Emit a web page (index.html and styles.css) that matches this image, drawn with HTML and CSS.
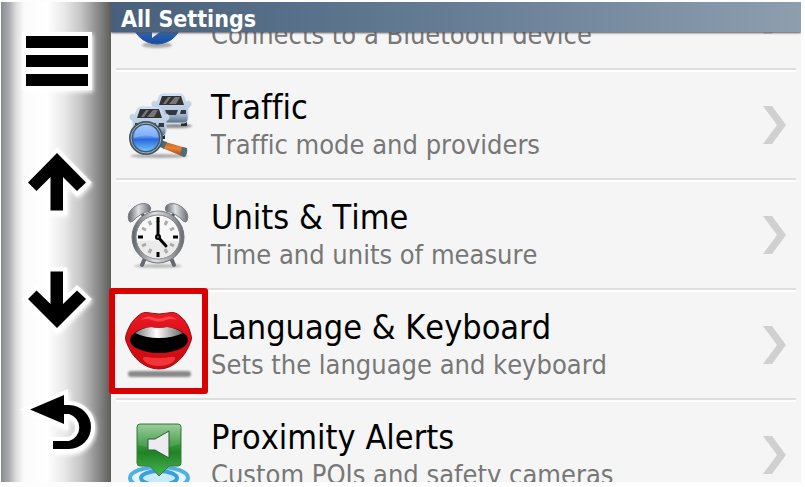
FILE: index.html
```html
<!DOCTYPE html>
<html lang="en">
<head>
    <meta charset="UTF-8">
    <meta name="viewport" content="width=device-width, initial-scale=1.0">
    <title>All Settings</title>
    <link rel="stylesheet" href="styles.css">
</head>
<body>
  <div class="device">
      <nav class="sidebar">
          <button type="button" aria-label="Menu">
              <svg viewBox="0 0 110 120">
                  <path class="glow" d="M21 30H91V88H21Z"/>
                  <path d="M25 34H87V46H25ZM25 53H87V65H25ZM25 72H87V84H25Z"/>
              </svg>
          </button>
          <button type="button" aria-label="Up">
              <svg viewBox="0 0 110 120">
                  <path class="outline" d="M56 31L27 60.500L35.500 69L49.500 55V88.500H62V55L76 69L85 60.500Z"/>
              </svg>
          </button>
          <button type="button" aria-label="Down">
              <svg viewBox="0 0 110 120">
                  <path class="outline" d="M56 86L27 57L35.500 48.500L49.500 62V29.500H62V62L76 48.500L85 57Z"/>
              </svg>
          </button>
          <button type="button" aria-label="Back">
              <svg viewBox="0 0 110 120">
                  <path class="outline" d="M29 47.500L63 33V43H68A22 22 0 0 1 68 87H52V79H68A14 14 0 0 0 68 52H63V62Z"/>
              </svg>
          </button>
      </nav>

      <main class="content">
          <h1>All Settings</h1>
          <ul class="settings">
              <li class="scrolled">
                  <a href="#bluetooth" aria-label="Bluetooth">
                      <svg class="icon" viewBox="0 0 70 70">
                          <defs>
                              <linearGradient id="blue" x2="0" y2="1">
                                  <stop offset="0" stop-color="#78b5f2"/>
                                  <stop offset="1" stop-color="#174c9f"/>
                              </linearGradient>
                              <filter id="soft" x="-20%" y="-60%" width="140%" height="220%"><feGaussianBlur stdDeviation="1"/></filter>
                          </defs>
                          <ellipse cx="33" cy="65" rx="15" ry="3" fill="#aaa" filter="url(#soft)"/>
                          <circle cx="33" cy="39" r="25" fill="url(#blue)" stroke="#2a569b"/>
                          <path d="M22 30L43 44L30 54V24L43 33L22 46" fill="none" stroke="#eef4ff" stroke-width="4"/>
                      </svg>
                      <span class="text"><small>Connects to a Bluetooth device</small></span>
                      <svg class="arrow" viewBox="0 0 24 38"><path d="M0 0H9L23 19L9 38H0L14 19Z"/></svg>
                  </a>
              </li>
              <li>
                  <a href="#traffic">
                      <svg class="icon" viewBox="0 0 70 70">
                          <defs>
                              <linearGradient id="body" x2="0" y2="1">
                                  <stop offset="0" stop-color="#d3e2f4"/>
                                  <stop offset="0.650" stop-color="#b4c8de"/>
                                  <stop offset="1" stop-color="#586f81"/>
                              </linearGradient>
                              <linearGradient id="lens" x2="0" y2="1">
                                  <stop offset="0" stop-color="#9cc4fb"/>
                                  <stop offset="0.450" stop-color="#5d97f3"/>
                                  <stop offset="0.550" stop-color="#2a68dc"/>
                                  <stop offset="1" stop-color="#7fd0ff"/>
                              </linearGradient>
                              <linearGradient id="handle" x1="0.600" y1="0" x2="0.400" y2="1">
                                  <stop offset="0" stop-color="#b8520f"/>
                                  <stop offset="0.450" stop-color="#e9813a"/>
                                  <stop offset="1" stop-color="#8a3506"/>
                              </linearGradient>
                              <g id="car">
                                  <path d="M5 25H11V32H5ZM30 25H36V32H30Z" fill="#252a2e"/>
                                  <path d="M8 3Q9 0 12 0H29Q32 0 33 3L35 8Q39 6 40 9Q41 12 37 14V24Q37 29 32 29H9Q4 29 4 24V14Q0 12 1 9Q2 6 6 8Z" fill="url(#body)" stroke="#c3d5eb"/>
                                  <path d="M11 2H30L33 11H8Z" fill="#333"/>
                                  <path d="M17 3L12 10H15L20 3ZM24 3L18 10H25L29 3Z" fill="#777"/>
                                  <path d="M14 16H27L25 21H16ZM6 16H11L12 20H6ZM30 16H35V20H29Z" fill="#303a44"/>
                              </g>
                          </defs>
                          <ellipse cx="51" cy="36" rx="17" ry="2" fill="#888" filter="url(#soft)"/>
                          <use href="#car" x="27" y="4"/>
                          <use href="#car" x="5" y="17"/>
                          <ellipse cx="35" cy="66" rx="29" ry="2" fill="#aaa" filter="url(#soft)"/>
                          <path d="M38 51L62 58Q64 62 60 67L36 57Z" fill="url(#handle)"/>
                          <path d="M37 50L43 52L40 59L35 56ZM58 57L63 58Q64 63 61 67L56 65Z" fill="#536a76"/>
                          <circle cx="22" cy="48" r="15" fill="url(#lens)" stroke="#405766" stroke-width="4"/>
                          <circle cx="22" cy="48" r="15" fill="none" stroke="#9fb4bf"/>
                          <path d="M10 48Q11 35 22 35T34 48Q22 43 10 48Z" fill="#cde2ff" opacity="0.300"/>
                      </svg>
                      <span class="text"><strong>Traffic</strong><small>Traffic mode and providers</small></span>
                      <svg class="arrow" viewBox="0 0 24 38"><path d="M0 0H9L23 19L9 38H0L14 19Z"/></svg>
                  </a>
              </li>
              <li>
                  <a href="#units">
                      <svg class="icon" viewBox="0 0 70 70">
                          <defs>
                              <linearGradient id="metal">
                                  <stop offset="0" stop-color="#5d6065"/>
                                  <stop offset="0.450" stop-color="#dfe1e4"/>
                                  <stop offset="1" stop-color="#686b70"/>
                              </linearGradient>
                          </defs>
                          <ellipse cx="34" cy="66" rx="24" ry="2" fill="#bbb" filter="url(#soft)"/>
                          <path d="M21 58L18 65M47 58L50 65" stroke="#666a70" stroke-width="4" stroke-linecap="round"/>
                          <path d="M20 17L17 12M48 17L51 12" stroke="#55585c" stroke-width="3"/>
                          <path d="M5 21Q2 13 10 7Q19 1 25 5Q28 8 26 11Q16 13 9 21Q6 23 5 21Z" fill="url(#metal)" stroke="#7b7e83"/>
                          <path d="M63 21Q66 13 58 7Q49 1 43 5Q40 8 42 11Q52 13 59 21Q62 23 63 21Z" fill="url(#metal)" stroke="#7b7e83"/>
                          <circle cx="34" cy="37" r="26" fill="url(#metal)" stroke="#6f747b"/>
                          <circle cx="34" cy="37" r="22" fill="#f8f8f8" stroke="#85898e"/>
                          <path d="M13 41Q34 40 55 41Q51 58 34 58T13 41Z" fill="#ebebeb"/>
                          <path d="M25 21L27 25M43 21L41 25M18 28L22 30M50 28L46 30M18 46L22 44M50 46L46 44M25 53L27 49M43 53L41 49" stroke="#aaa" stroke-width="3"/>
                          <path d="M34 17V22M34 52V57M14 37H19M49 37H54" stroke="#000" stroke-width="3"/>
                          <path d="M34 37V22M34 37L42 46" stroke="#000" stroke-width="3" stroke-linecap="round"/>
                          <circle cx="34" cy="37" r="3"/>
                          <circle cx="34" cy="37" r="1" fill="#777"/>
                      </svg>
                      <span class="text"><strong>Units &amp; Time</strong><small>Time and units of measure</small></span>
                      <svg class="arrow" viewBox="0 0 24 38"><path d="M0 0H9L23 19L9 38H0L14 19Z"/></svg>
                  </a>
              </li>
              <li class="highlight">
                  <a href="#language">
                      <svg class="icon" viewBox="0 0 70 70">
                          <defs>
                              <linearGradient id="lips" x2="0" y2="1">
                                  <stop offset="0" stop-color="#e91b24"/>
                                  <stop offset="0.500" stop-color="#d90c16"/>
                                  <stop offset="1" stop-color="#c50d12"/>
                              </linearGradient>
                              <linearGradient id="teeth">
                                  <stop offset="0" stop-color="#777"/>
                                  <stop offset="0.450" stop-color="#fff"/>
                                  <stop offset="1" stop-color="#666"/>
                              </linearGradient>
                          </defs>
                          <rect x="4" y="61" width="63" height="6" rx="3" fill="#888" filter="url(#soft)"/>
                          <path d="M2 25Q6 12 14 6Q19 1 26 3Q35 5 44 3Q51 1 56 6Q64 12 67 25Q68 28 67 31Q62 45 53 52Q45 59 35 59T16 52Q7 45 2 31Q1 28 2 25Z" fill="url(#lips)" stroke="#970b10"/>
                          <path d="M17 10Q22 5 28 7Q35 10 42 7Q48 5 53 10Q47 8 42 10Q35 13 28 10Q23 8 17 10Z" fill="#f9444a"/>
                          <path d="M7 26Q14 18 27 17Q35 19 43 17Q56 18 63 26Q66 34 58 38Q48 43 35 43T12 38Q4 34 7 26Z" fill="#000"/>
                          <path d="M11 23Q18 18 27 17Q35 19 43 17Q52 18 59 23Q49 28 35 28T11 23Z" fill="url(#teeth)"/>
                          <path d="M19 49Q19 46 23 47Q35 49 47 47Q52 46 51 49Q48 56 35 56T19 49Z" fill="#f33538"/>
                      </svg>
                      <span class="text"><strong>Language &amp; Keyboard</strong><small>Sets the language and keyboard</small></span>
                      <svg class="arrow" viewBox="0 0 24 38"><path d="M0 0H9L23 19L9 38H0L14 19Z"/></svg>
                  </a>
              </li>
              <li>
                  <a href="#alerts">
                      <svg class="icon" viewBox="0 0 70 70">
                          <defs>
                              <linearGradient id="green" x2="0" y2="1">
                                  <stop offset="0" stop-color="#8fc790"/>
                                  <stop offset="0.350" stop-color="#3d9b41"/>
                                  <stop offset="0.550" stop-color="#208227"/>
                                  <stop offset="1" stop-color="#48b64b"/>
                              </linearGradient>
                          </defs>
                          <ellipse cx="35" cy="58" rx="29" ry="11" fill="#e4f5ff" stroke="#50afe3" stroke-width="4"/>
                          <ellipse cx="35" cy="58" rx="18" ry="7" fill="#c9eafd" stroke="#3a9fdd" stroke-width="4"/>
                          <path d="M16 4H54Q57 4 57 7V43Q57 46 54 46H45L35 56L26 46H16Q13 46 13 43V7Q13 4 16 4Z" fill="url(#green)" stroke="#3b7b3d"/>
                          <path d="M14 5H56V24Q34 32 14 25Z" fill="#fff" opacity="0.120"/>
                          <path d="M24 19H31L45 11V38L31 30H24Z" fill="#ececf0" stroke="#285d2b"/>
                      </svg>
                      <span class="text"><strong>Proximity Alerts</strong><small>Custom POIs and safety cameras</small></span>
                      <svg class="arrow" viewBox="0 0 24 38"><path d="M0 0H9L23 19L9 38H0L14 19Z"/></svg>
                  </a>
              </li>
          </ul>
      </main>
  </div>
</body>
</html>
```

FILE: styles.css
```css
*,
*::after {
    box-sizing: border-box;
}
body {
    margin: 0;
    padding: 2px 4px 5px 1px;
    height: 100vh;
    background-color: #fdfdfd;
    font-family: "DejaVu Sans Condensed", "DejaVu Sans", sans-serif;
    font-kerning: none;
    font-variant-ligatures: none;
}
.device {
    display: flex;
    height: 100%;
    overflow: hidden;
    background-color: #f5f5f5;
}
.sidebar {
    display: flex;
    flex-direction: column;
    flex: 0 0 110px;
    background: linear-gradient(to right, #888c93 0%, #a8aaae 7%, #dedede 14%, #fbfbfb 21%, #fff 42%, #e8e8e8 58%, #c4c4c4 73%, #929292 86%, #5e5e5b 100%);
}
.sidebar button {
    flex: 1;
    min-height: 0;
    padding: 0;
    border: none;
    background: none;
    cursor: pointer;
}
.sidebar svg {
    display: block;
    width: 100%;
    height: 100%;
}
.glow {
    fill: #fff;
    filter: drop-shadow(1px 2px 2px #fff);
}
.outline {
    stroke: #fff;
    stroke-width: 8px;
    paint-order: stroke;
    filter: drop-shadow(1px 2px 2px #fff);
}
.content {
    flex: 1;
    min-width: 0;
}
h1 {
    position: relative;
    z-index: 1;
    height: 30px;
    margin: 0;
    padding-left: 10px;
    background: linear-gradient(to right, #48607b, #667d95 50%, #8e9eaf);
    box-shadow: 0 1px 2px #555;
    color: #fff;
    font-size: 23px;
    line-height: 34px;
}
/* list is scrolled down by most of the first row */
.settings {
    margin: -72px 0 0;
    padding: 0 5px;
    list-style: none;
}
.settings li {
    position: relative;
    height: 110px;
    border-bottom: 2px solid #dedede;
    box-shadow: 0 2px 0 #fff;
}
.settings a {
    display: flex;
    align-items: center;
    height: 100%;
    padding: 2px 9px 0 8px;
    color: #000;
    text-decoration: none;
}
.icon {
    flex: none;
    width: 70px;
    height: 70px;
}
.text {
    flex: 1;
    padding: 2px 0 0 17px;
    white-space: nowrap;
}
.text strong,
.text small {
    display: block;
    font-weight: normal;
}
.text strong {
    font-size: 34px;
    line-height: 38px;
}
.text small {
    color: #777;
    font-size: 27px;
    line-height: 38px;
}
.scrolled .text {
    padding-top: 40px;
}
.arrow {
    flex: none;
    width: 24px;
    height: 38px;
    fill: #d0d0d0;
}
.highlight::after {
    content: "";
    position: absolute;
    top: -2px;
    left: -7px;
    width: 99px;
    height: 106px;
    border: 6px solid #d90000;
    border-radius: 3px;
}
```
